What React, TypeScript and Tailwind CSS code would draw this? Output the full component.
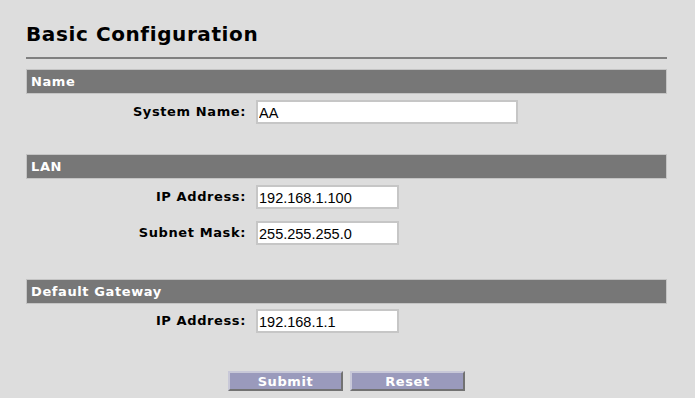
import React from "react";

const labelFont = { fontFamily: '"DejaVu Sans", Verdana, sans-serif' };

function Bar({ title }: { title: string }) {
  return (
    <div
      className="h-[25px] bg-[#777777] border border-[#c4c4c4] flex items-center pl-[4px] text-white font-bold text-[13px] tracking-[0.6px]"
      style={labelFont}
    >
      {title}
    </div>
  );
}

function Row({ label, value, wide, mt }: { label: string; value: string; wide?: boolean; mt: string }) {
  return (
    <div className={`flex items-center ${mt}`}>
      <div className="w-[220px] text-right font-bold text-[13px] tracking-[0.6px] text-black" style={labelFont}>
        {label}
      </div>
      <input
        defaultValue={value}
        className={`ml-[10px] h-[24px] ${wide ? "w-[262px]" : "w-[143px]"} bg-white border-2 border-[#c6c6c6] px-[1px] pt-[1px] text-[14.5px] text-black outline-none`}
        style={{ fontFamily: '"Liberation Sans", Arial, sans-serif' }}
      />
    </div>
  );
}

export default function App() {
  return (
    <div className="w-[695px] h-[398px] bg-[#dddddd] pt-[22px] pl-[26px] pr-[28px] overflow-hidden">
      <h1 className="text-[20px] leading-[24px] font-bold tracking-[0.6px] text-black" style={labelFont}>
        Basic Configuration
      </h1>
      <div className="mt-[11px] h-[2px] bg-[#808080]" />
      <div className="mt-[10px]">
        <Bar title="Name" />
        <Row label="System Name:" value="AA" wide mt="mt-[6px]" />
      </div>
      <div className="mt-[30px]">
        <Bar title="LAN" />
        <Row label="IP Address:" value="192.168.1.100" mt="mt-[6px]" />
        <Row label="Subnet Mask:" value="255.255.255.0" mt="mt-[12px]" />
      </div>
      <div className="mt-[34px]">
        <Bar title="Default Gateway" />
        <Row label="IP Address:" value="192.168.1.1" mt="mt-[5px]" />
      </div>
      <div className="mt-[38px] flex justify-center gap-[7px]">
        {["Submit", "Reset"].map((t) => (
          <button
            key={t}
            className="w-[115px] h-[20px] bg-[#9a9abc] border-2 border-t-[#c8c8d8] border-l-[#c8c8d8] border-b-[#727272] border-r-[#727272] text-white font-bold text-[13px] tracking-[0.6px] leading-none"
            style={labelFont}
          >
            {t}
          </button>
        ))}
      </div>
    </div>
  );
}
